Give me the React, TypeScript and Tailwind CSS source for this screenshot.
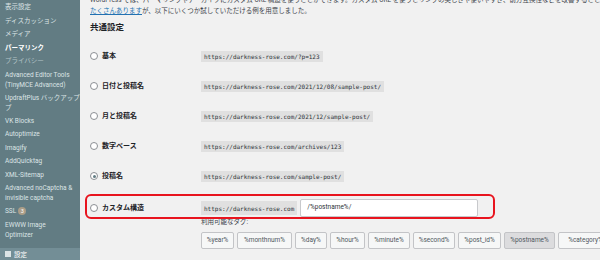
import React from "react";

type Item = { lines: string[]; current?: boolean; dim?: boolean; badge?: string };

const items: Item[] = [
  { lines: ["表示設定"] },
  { lines: ["ディスカッション"] },
  { lines: ["メディア"] },
  { lines: ["パーマリンク"], current: true },
  { lines: ["プライバシー"], dim: true },
  { lines: ["Advanced Editor Tools", "(TinyMCE Advanced)"] },
  { lines: ["UpdraftPlus バックアップ", "プ"] },
  { lines: ["VK Blocks"] },
  { lines: ["Autoptimize"] },
  { lines: ["Imagify"] },
  { lines: ["AddQuicktag"] },
  { lines: ["XML-Sitemap"] },
  { lines: ["Advanced noCaptcha &", "invisible captcha"] },
  { lines: ["SSL"], badge: "3" },
  { lines: ["EWWW Image", "Optimizer"] },
];

const rows: { label: string; url: string; checked?: boolean }[] = [
  { label: "基本", url: "https://darkness-rose.com/?p=123" },
  { label: "日付と投稿名", url: "https://darkness-rose.com/2021/12/08/sample-post/" },
  { label: "月と投稿名", url: "https://darkness-rose.com/2021/12/sample-post/" },
  { label: "数字ベース", url: "https://darkness-rose.com/archives/123" },
  { label: "投稿名", url: "https://darkness-rose.com/sample-post/", checked: true },
];

const tags: { t: string; w: string; active?: boolean }[] = [
  { t: "%year%", w: "w-[33px]" },
  { t: "%monthnum%", w: "w-[55px]" },
  { t: "%day%", w: "w-[32px]" },
  { t: "%hour%", w: "w-[35px]" },
  { t: "%minute%", w: "w-[42px]" },
  { t: "%second%", w: "w-[42px]" },
  { t: "%post_id%", w: "w-[43px]" },
  { t: "%postname%", w: "w-[51px]", active: true },
  { t: "%category%", w: "w-[55px]" },
];

function Radio({ checked }: { checked?: boolean }) {
  return (
    <span className="w-[8px] h-[8px] rounded-full border border-[#8c8f94] bg-white flex items-center justify-center shrink-0">
      {checked && <span className="w-[3px] h-[3px] rounded-full bg-[#627c83]" />}
    </span>
  );
}

export default function App() {
  return (
    <div className="w-[600px] h-[260px] overflow-hidden flex bg-[#f1f1f1] font-['Roboto','Noto_Sans_CJK_JP',sans-serif]">
      {/* Sidebar */}
      <div className="w-[80px] shrink-0 bg-[#627c83] flex flex-col overflow-hidden">
        {items.map((it, i) => (
          <div
            key={i}
            className={`pl-[5px] pr-[2px] py-[2px] text-[6.5px] leading-[10px] whitespace-nowrap overflow-hidden ${
              it.current
                ? "text-white font-bold"
                : it.dim
                ? "text-[#b4c4c8]"
                : "text-[#dce4e6]"
            }`}
          >
            {it.lines.map((l, j) => (
              <div key={j} className="flex items-center gap-[2px]">
                <span>{l}</span>
                {it.badge && (
                  <span className="w-[8px] h-[8px] rounded-full bg-[#aa9d88] text-white text-[5.5px] leading-[8px] flex items-center justify-center">
                    {it.badge}
                  </span>
                )}
              </div>
            ))}
          </div>
        ))}
        <div className="mt-[7px] bg-[#738e96] flex-1 pl-[5px] pt-[2px] flex items-start gap-[3px]">
          <span className="w-[6px] h-[6px] bg-[#dce4e6] mt-[1px]" />
          <span className="text-[6.5px] leading-[10px] text-white whitespace-nowrap">設定</span>
        </div>
      </div>

      {/* Main */}
      <div className="flex-1 pl-[10px] flex flex-col text-[#3c434a] overflow-hidden">
        <div className="-mt-[5px] text-[6.5px] leading-[11px] whitespace-nowrap">
          <div>WordPress では、パーマリンクやアーカイブにカスタム URL 構造を使うことができます。カスタム URL を使うとリンクの美しさや使いやすさ、前方互換性などを改善することができます。利用可能なタグは</div>
          <div>
            <span className="text-[#2271b1] underline">たくさんあります</span>が、以下にいくつか試していただける例を用意しました。
          </div>
        </div>
        <div className="mt-[4px] h-[12px] flex items-center text-[8.5px] font-bold text-[#1d2327]">共通設定</div>

        <div className="mt-[8px] flex flex-col">
          {rows.map((r, i) => (
            <div key={i} className="h-[30px] flex items-center">
              <div className="w-[111px] shrink-0 flex items-center gap-[4px]">
                <Radio checked={r.checked} />
                <span className="text-[7px] font-bold text-[#1d2327]">{r.label}</span>
              </div>
              <code className="h-[11px] px-[3px] bg-[#e0e0e0] flex items-center text-[6px] font-['DejaVu_Sans_Mono',monospace] text-[#2c3338]">
                {r.url}
              </code>
            </div>
          ))}
        </div>

        {/* Custom row */}
        <div className="relative mt-[8px] flex">
          <div className="w-[111px] shrink-0 h-[18px] flex items-center gap-[4px]">
            <Radio />
            <span className="text-[7px] font-bold text-[#1d2327]">カスタム構造</span>
          </div>
          <div className="flex flex-col">
            <div className="flex items-center gap-[3px]">
              <code className="h-[14px] px-[3px] bg-[#e0e0e0] flex items-center text-[6px] font-['DejaVu_Sans_Mono',monospace] text-[#2c3338]">
                https://darkness-rose.com
              </code>
              <div className="w-[178px] h-[18px] bg-white border border-[#c8c9cc] rounded-[2px] flex items-center pl-[6px] text-[6.5px] text-[#2c3338]">
                /%postname%/
              </div>
            </div>
            <div className="mt-[1px] h-[10px] flex items-center text-[6.5px] text-[#3c434a]">利用可能なタグ:</div>
            <div className="mt-[4px] flex gap-[3px]">
              {tags.map((t, i) => (
                <div
                  key={i}
                  className={`${t.w} h-[17px] shrink-0 rounded-[2px] border border-[#c3c4c7] flex items-center justify-center text-[6.5px] text-[#50575e] ${
                    t.active ? "bg-[#dcdcde]" : "bg-[#f6f7f7]"
                  }`}
                >
                  {t.t}
                </div>
              ))}
            </div>
          </div>
          <div className="absolute left-[-5px] top-[-5px] w-[410px] h-[25px] border-2 border-[#e8141e] rounded-[6px] pointer-events-none" />
        </div>
      </div>
    </div>
  );
}
